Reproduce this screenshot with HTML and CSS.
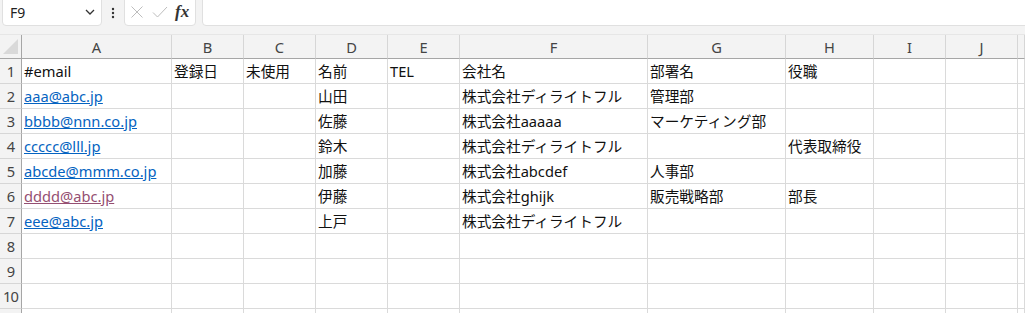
FILE: index.html
```html
<!DOCTYPE html>
<html>

<head>
    <title>Sheet1</title>
    <link rel="stylesheet" href="styles.css">
</head>

<body>
    <div class="formula-bar">
        <div class="name-box">
            <span class="name-text">F9</span>
            <svg class="chevron" width="10" height="6" viewBox="0 0 10 6">
                <path d="M1 1 L5 5 L9 1" fill="none" stroke="#333" stroke-width="1.3" />
            </svg>
        </div>
        <div class="grip">
            <svg width="4" height="14" viewBox="0 0 4 14">
                <circle cx="2" cy="3" r="1.2" fill="#333" />
                <circle cx="2" cy="7" r="1.2" fill="#333" />
                <circle cx="2" cy="11" r="1.2" fill="#333" />
            </svg>
        </div>
        <div class="fx-box">
            <svg width="14" height="14" viewBox="0 0 14 14">
                <path d="M1.5 1.5 L12.5 12.5 M12.5 1.5 L1.5 12.5" fill="none" stroke="#bdbdbd" stroke-width="1" />
            </svg>
            <svg width="16" height="14" viewBox="0 0 16 14">
                <path d="M1 7.5 L5.5 12 L15 2" fill="none" stroke="#bdbdbd" stroke-width="1" />
            </svg>
            <span class="fx">fx</span>
        </div>
        <div class="input-box"></div>
    </div>

    <div class="sheet">
        <div class="row head">
            <div class="corner"><span class="triangle"></span></div>
            <div class="col">A</div>
            <div class="col">B</div>
            <div class="col">C</div>
            <div class="col">D</div>
            <div class="col">E</div>
            <div class="col">F</div>
            <div class="col">G</div>
            <div class="col">H</div>
            <div class="col">I</div>
            <div class="col">J</div>
            <div class="col"></div>
        </div>

        <div class="row">
            <div class="num">1</div>
            <div class="cell">#email</div>
            <div class="cell">登録日</div>
            <div class="cell">未使用</div>
            <div class="cell">名前</div>
            <div class="cell">TEL</div>
            <div class="cell">会社名</div>
            <div class="cell">部署名</div>
            <div class="cell">役職</div>
            <div class="cell"></div>
            <div class="cell"></div>
            <div class="cell"></div>
        </div>

        <div class="row">
            <div class="num">2</div>
            <div class="cell"><a class="link">aaa@abc.jp</a></div>
            <div class="cell"></div>
            <div class="cell"></div>
            <div class="cell">山田</div>
            <div class="cell"></div>
            <div class="cell">株式会社ディライトフル</div>
            <div class="cell">管理部</div>
            <div class="cell"></div>
            <div class="cell"></div>
            <div class="cell"></div>
            <div class="cell"></div>
        </div>

        <div class="row">
            <div class="num">3</div>
            <div class="cell"><a class="link">bbbb@nnn.co.jp</a></div>
            <div class="cell"></div>
            <div class="cell"></div>
            <div class="cell">佐藤</div>
            <div class="cell"></div>
            <div class="cell">株式会社aaaaa</div>
            <div class="cell">マーケティング部</div>
            <div class="cell"></div>
            <div class="cell"></div>
            <div class="cell"></div>
            <div class="cell"></div>
        </div>

        <div class="row">
            <div class="num">4</div>
            <div class="cell"><a class="link">ccccc@lll.jp</a></div>
            <div class="cell"></div>
            <div class="cell"></div>
            <div class="cell">鈴木</div>
            <div class="cell"></div>
            <div class="cell">株式会社ディライトフル</div>
            <div class="cell"></div>
            <div class="cell">代表取締役</div>
            <div class="cell"></div>
            <div class="cell"></div>
            <div class="cell"></div>
        </div>

        <div class="row">
            <div class="num">5</div>
            <div class="cell"><a class="link">abcde@mmm.co.jp</a></div>
            <div class="cell"></div>
            <div class="cell"></div>
            <div class="cell">加藤</div>
            <div class="cell"></div>
            <div class="cell">株式会社abcdef</div>
            <div class="cell">人事部</div>
            <div class="cell"></div>
            <div class="cell"></div>
            <div class="cell"></div>
            <div class="cell"></div>
        </div>

        <div class="row">
            <div class="num">6</div>
            <div class="cell"><a class="link visited">dddd@abc.jp</a></div>
            <div class="cell"></div>
            <div class="cell"></div>
            <div class="cell">伊藤</div>
            <div class="cell"></div>
            <div class="cell">株式会社ghijk</div>
            <div class="cell">販売戦略部</div>
            <div class="cell">部長</div>
            <div class="cell"></div>
            <div class="cell"></div>
            <div class="cell"></div>
        </div>

        <div class="row">
            <div class="num">7</div>
            <div class="cell"><a class="link">eee@abc.jp</a></div>
            <div class="cell"></div>
            <div class="cell"></div>
            <div class="cell">上戸</div>
            <div class="cell"></div>
            <div class="cell">株式会社ディライトフル</div>
            <div class="cell"></div>
            <div class="cell"></div>
            <div class="cell"></div>
            <div class="cell"></div>
            <div class="cell"></div>
        </div>

        <div class="row">
            <div class="num">8</div>
            <div class="cell"></div>
            <div class="cell"></div>
            <div class="cell"></div>
            <div class="cell"></div>
            <div class="cell"></div>
            <div class="cell"></div>
            <div class="cell"></div>
            <div class="cell"></div>
            <div class="cell"></div>
            <div class="cell"></div>
            <div class="cell"></div>
        </div>

        <div class="row">
            <div class="num">9</div>
            <div class="cell"></div>
            <div class="cell"></div>
            <div class="cell"></div>
            <div class="cell"></div>
            <div class="cell"></div>
            <div class="cell"></div>
            <div class="cell"></div>
            <div class="cell"></div>
            <div class="cell"></div>
            <div class="cell"></div>
            <div class="cell"></div>
        </div>

        <div class="row">
            <div class="num">10</div>
            <div class="cell"></div>
            <div class="cell"></div>
            <div class="cell"></div>
            <div class="cell"></div>
            <div class="cell"></div>
            <div class="cell"></div>
            <div class="cell"></div>
            <div class="cell"></div>
            <div class="cell"></div>
            <div class="cell"></div>
            <div class="cell"></div>
        </div>

        <div class="row">
            <div class="num"></div>
            <div class="cell"></div>
            <div class="cell"></div>
            <div class="cell"></div>
            <div class="cell"></div>
            <div class="cell"></div>
            <div class="cell"></div>
            <div class="cell"></div>
            <div class="cell"></div>
            <div class="cell"></div>
            <div class="cell"></div>
            <div class="cell"></div>
        </div>
    </div>
</body>

</html>
```

FILE: styles.css
```css
body {
    margin: 0;
    font-family: 'Noto Sans', 'Noto Sans CJK JP', sans-serif;
    font-size: 14.67px;
    color: #111;
    background-color: #fff;
    overflow: hidden;
}

.formula-bar {
    height: 35px;
    display: flex;
    align-items: flex-end;
    padding: 0 0 8px 2px;
    box-sizing: border-box;
    background-color: #f3f3f3;
    border-bottom: 1px solid #e6e6e6;
    overflow: hidden;
}

.name-box,
.fx-box,
.input-box {
    height: 32px;
    background-color: #fff;
    border: 1px solid #e0e0e0;
    border-radius: 4px;
    box-sizing: border-box;
    display: flex;
    align-items: center;
}

.name-box {
    width: 100px;
    padding: 4px 6px 0 7px;
    justify-content: space-between;
}

.name-text {
    font-size: 14px;
    color: #222;
}

.grip {
    width: 22px;
    display: flex;
    justify-content: center;
    padding-bottom: 6px;
}

.fx-box {
    width: 72px;
    padding: 4px 0 0 5px;
    gap: 8px;
}

.fx {
    font-family: 'Liberation Serif', serif;
    font-style: italic;
    font-weight: bold;
    font-size: 17px;
    color: #333;
    margin-left: -1px;
}

.input-box {
    flex: 1;
    margin-left: 6px;
    margin-right: -10px;
}

.row {
    display: grid;
    grid-template-columns: 22px 150px 72px 72px 72px 72px 188px 138px 88px 72px 72px 1fr;
    height: 25px;
}

.row.head {
    height: 24px;
    background-color: #f3f3f3;
}

.col,
.corner {
    border-right: 1px solid #d6d6d6;
    border-bottom: 1px solid #a6a6a6;
    display: flex;
    align-items: center;
    justify-content: center;
    color: #444;
    font-size: 14.67px;
    line-height: 22px;
}

.corner {
    position: relative;
    border-right: 1px solid #a6a6a6;
}

.triangle {
    position: absolute;
    left: 3px;
    bottom: 4px;
    width: 0;
    height: 0;
    border-left: 15px solid transparent;
    border-bottom: 15px solid #d9d9d9;
}

.num {
    background-color: #f3f3f3;
    border-right: 1px solid #a6a6a6;
    border-bottom: 1px solid #d6d6d6;
    display: flex;
    align-items: center;
    justify-content: center;
    color: #444;
    font-size: 14.67px;
    letter-spacing: -1px;
}

.cell {
    border-right: 1px solid #dadada;
    border-bottom: 1px solid #dadada;
    padding-left: 2px;
    line-height: 24px;
    white-space: nowrap;
    overflow: visible;
}

.link {
    color: #0563c1;
    text-decoration: underline;
}

.link.visited {
    color: #954f72;
}
```
